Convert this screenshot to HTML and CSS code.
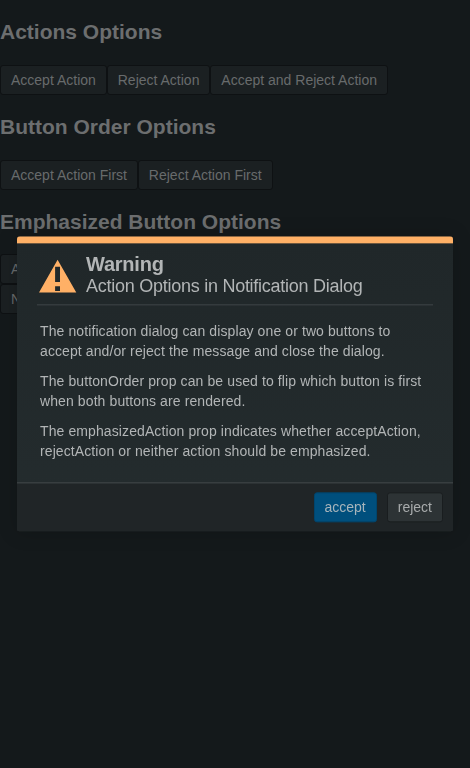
FILE: index.html
```html
<!DOCTYPE html>
<html lang="en">
<head>
<meta charset="utf-8">
<title>Notification Dialog</title>
<link rel="stylesheet" href="styles.css">
</head>
<body>
<main class="page">
  <h2>Actions Options</h2>
  <div class="row"><button>Accept Action</button><button>Reject Action</button><button>Accept and Reject Action</button></div>
  <h2>Button Order Options</h2>
  <div class="row"><button>Accept Action First</button><button>Reject Action First</button></div>
  <h2>Emphasized Button Options</h2>
  <div class="row narrow"><button>Accept Emphasized</button><button>None Emphasized</button></div>
</main>
<section class="dialog" role="dialog" aria-labelledby="title">
  <div class="bar"></div>
  <header class="header">
    <svg class="icon" width="38" height="34" viewBox="0 0 38 34"><path fill="#ffb066" fill-rule="evenodd" d="M18.6 0.5 37.3 33.2H0ZM16.1 7.3V22.6H21V7.3ZM16.1 27V31.6H21V27Z"/></svg>
    <div>
      <div class="title" id="title">Warning</div>
      <div class="subtitle">Action Options in Notification Dialog</div>
    </div>
  </header>
  <div class="body">
    <p>The notification dialog can display one or two buttons to<br>accept and/or reject the message and close the dialog.</p>
    <p>The buttonOrder prop can be used to flip which button is first<br>when both buttons are rendered.</p>
    <p>The emphasizedAction prop indicates whether acceptAction,<br>rejectAction or neither action should be emphasized.</p>
  </div>
  <footer class="footer"><button class="accept">accept</button><button class="reject">reject</button></footer>
</section>
</body>
</html>
```
FILE: styles.css
```css
* { box-sizing: border-box; }
body {
  margin: 0;
  height: 768px;
  overflow: hidden;
  background: #14191b;
  font: 14px/20px "Liberation Sans", Arial, sans-serif;
}
.page { padding-top: 20px; color: #6c6e6f; }
h2 { margin: 0 0 21px; font-size: 21px; line-height: 24px; font-weight: bold; white-space: nowrap; }
.row { display: flex; margin-bottom: 20px; }
.row button + button { margin-left: -0.1px; }
.row.narrow { flex-direction: column; align-items: flex-start; margin-top: -1px; }
.row.narrow button { margin-left: 0; }
button {
  height: 30px;
  padding: 0 10px;
  border: 1px solid #0e1113;
  border-radius: 3px;
  background: #1b2022;
  color: #686b6c;
  font: 14px/20px "Liberation Sans", Arial, sans-serif;
  white-space: nowrap;
}
.dialog {
  position: fixed;
  top: 50%;
  left: 50%;
  transform: translate(-50%, calc(-50% - 0.15px));
  width: 436px;
  height: 295px;
  display: flex;
  flex-direction: column;
  overflow: hidden;
  border-radius: 3px 3px 2px 2px;
  background: linear-gradient(#202729, #242c2e);
  color: #b2b5b6;
  box-shadow: 0 0 20px rgba(0, 0, 0, 0.18);
}
.bar { height: 7px; flex: none; background: #ffb066; }
.header {
  display: flex;
  height: 62px;
  flex: none;
  margin: 0 20px;
  padding: 10px 0 0 2px;
  gap: 9px;
  border-bottom: 1px solid #3f4649;
}
.icon { flex: none; margin-top: 6px; }
.title { font-size: 20px; line-height: 22px; font-weight: bold; letter-spacing: -0.23px; }
.subtitle { font-size: 18px; line-height: 22px; letter-spacing: -0.26px; white-space: nowrap; }
.body { flex: 1; padding: 16px 20px 0 23px; letter-spacing: 0.1px; white-space: nowrap; }
.body p { margin: 0 0 10px; }
.footer {
  display: flex;
  justify-content: flex-end;
  align-items: center;
  flex: none;
  gap: 10px;
  height: 49px;
  padding: 0 10px;
  border-top: 1px solid #464c4e;
  background: #202527;
}
.footer .accept { background: #004f7d; border-color: #00456d; color: #a6b4bb; }
.footer .reject { background: #2d3335; border-color: #191d1f; color: #a8abac; }
```
